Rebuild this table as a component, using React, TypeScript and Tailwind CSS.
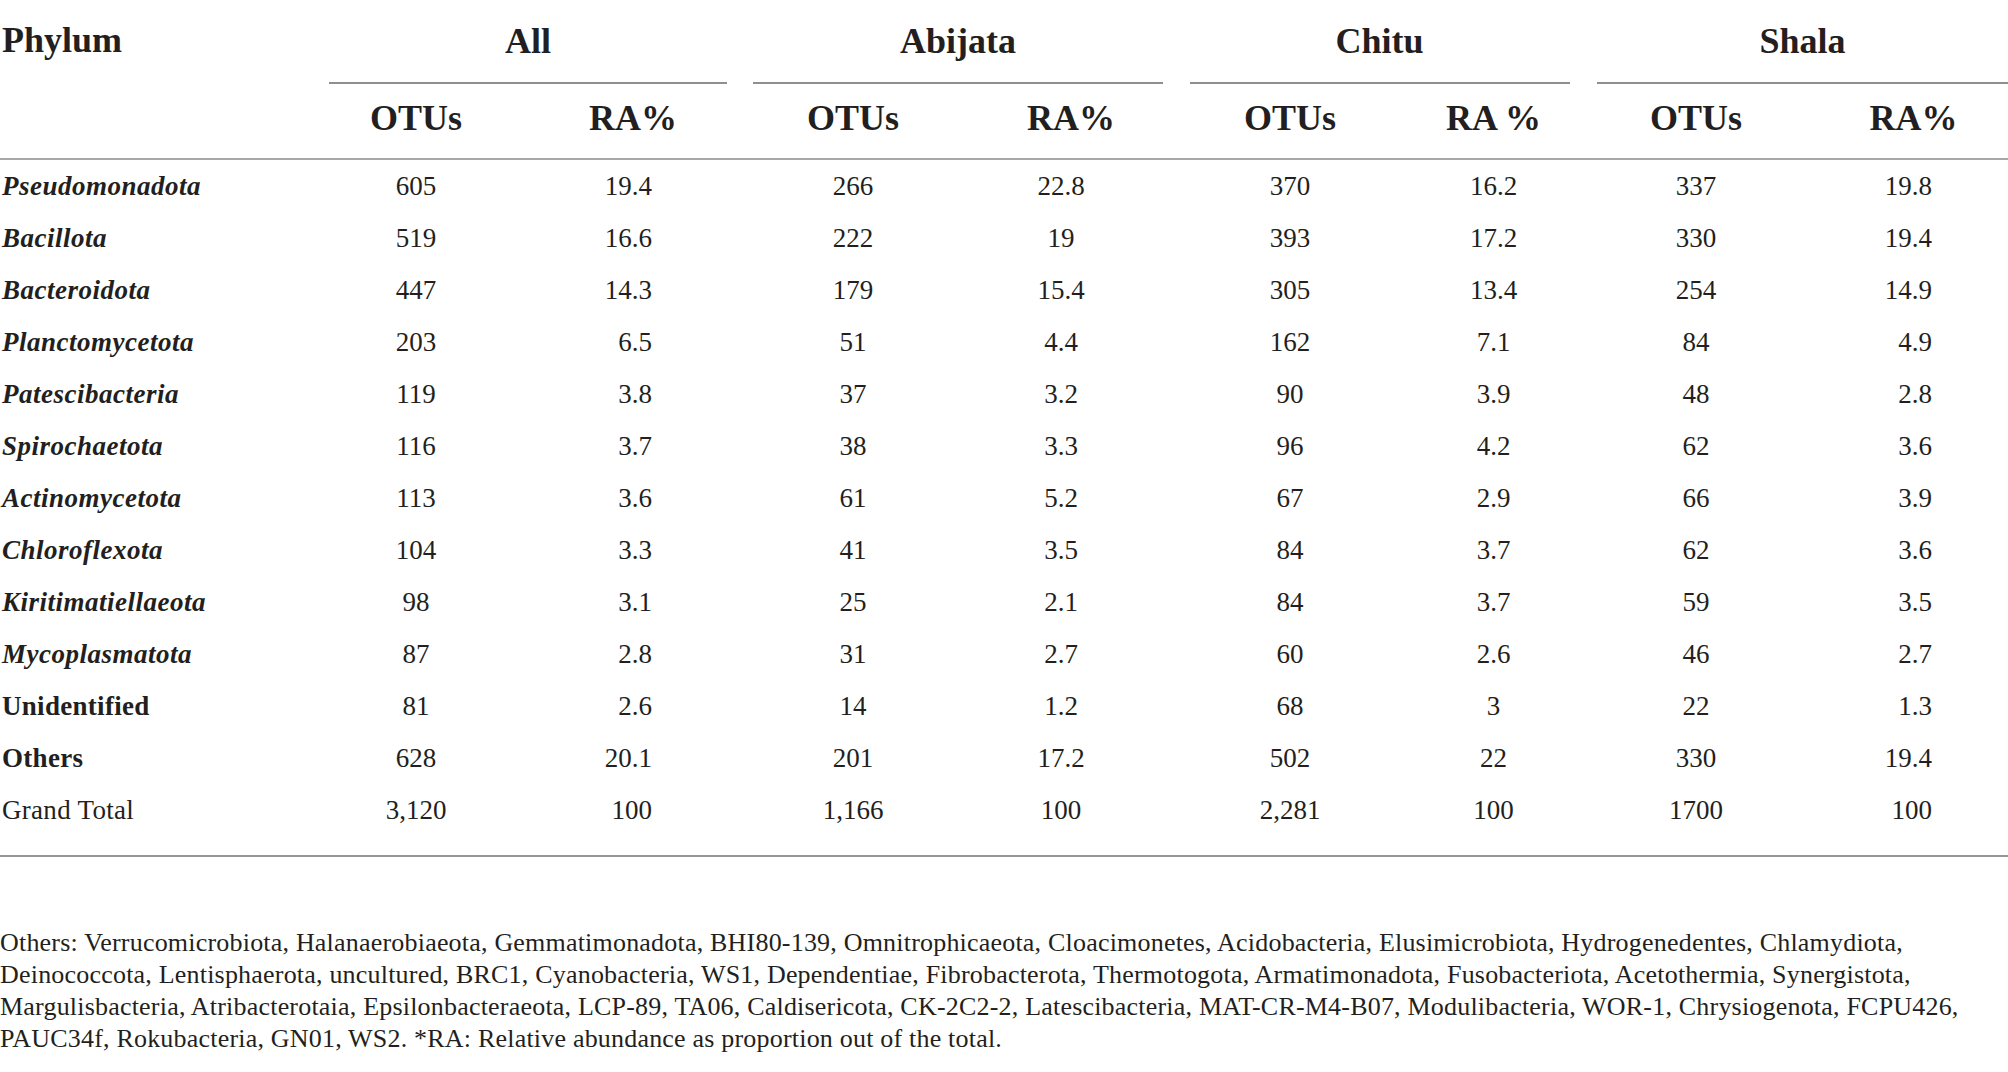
import React from 'react';

type Row = {
  name: string;
  style: 'italic' | 'bold' | 'plain';
  values: string[];
};

const rows: Row[] = [
  { name: 'Pseudomonadota', style: 'italic', values: ['605', '19.4', '266', '22.8', '370', '16.2', '337', '19.8'] },
  { name: 'Bacillota', style: 'italic', values: ['519', '16.6', '222', '19', '393', '17.2', '330', '19.4'] },
  { name: 'Bacteroidota', style: 'italic', values: ['447', '14.3', '179', '15.4', '305', '13.4', '254', '14.9'] },
  { name: 'Planctomycetota', style: 'italic', values: ['203', '6.5', '51', '4.4', '162', '7.1', '84', '4.9'] },
  { name: 'Patescibacteria', style: 'italic', values: ['119', '3.8', '37', '3.2', '90', '3.9', '48', '2.8'] },
  { name: 'Spirochaetota', style: 'italic', values: ['116', '3.7', '38', '3.3', '96', '4.2', '62', '3.6'] },
  { name: 'Actinomycetota', style: 'italic', values: ['113', '3.6', '61', '5.2', '67', '2.9', '66', '3.9'] },
  { name: 'Chloroflexota', style: 'italic', values: ['104', '3.3', '41', '3.5', '84', '3.7', '62', '3.6'] },
  { name: 'Kiritimatiellaeota', style: 'italic', values: ['98', '3.1', '25', '2.1', '84', '3.7', '59', '3.5'] },
  { name: 'Mycoplasmatota', style: 'italic', values: ['87', '2.8', '31', '2.7', '60', '2.6', '46', '2.7'] },
  { name: 'Unidentified', style: 'bold', values: ['81', '2.6', '14', '1.2', '68', '3', '22', '1.3'] },
  { name: 'Others', style: 'bold', values: ['628', '20.1', '201', '17.2', '502', '22', '330', '19.4'] },
  { name: 'Grand Total', style: 'plain', values: ['3,120', '100', '1,166', '100', '2,281', '100', '1700', '100'] },
];

// alignment of each value column (OTUs centred, RA columns follow the original layout)
const valueCell = [
  'justify-center',
  'justify-end pr-[88px]',
  'justify-center',
  'justify-center pr-[20px]',
  'justify-center',
  'justify-center',
  'justify-center',
  'justify-end pr-[76px]',
];

const groups = [
  { name: 'All', rule: 'mx-[13px]' },
  { name: 'Abijata', rule: 'mx-[13px]' },
  { name: 'Chitu', rule: 'ml-[14px] mr-[13px]' },
  { name: 'Shala', rule: 'ml-[14px] mr-0' },
];

const subHeads = ['OTUs', 'RA%', 'OTUs', 'RA%', 'OTUs', 'RA %', 'OTUs', 'RA%'];

const footnote = [
  'Others: Verrucomicrobiota, Halanaerobiaeota, Gemmatimonadota, BHI80-139, Omnitrophicaeota, Cloacimonetes, Acidobacteria, Elusimicrobiota, Hydrogenedentes, Chlamydiota,',
  'Deinococcota, Lentisphaerota, uncultured, BRC1, Cyanobacteria, WS1, Dependentiae, Fibrobacterota, Thermotogota, Armatimonadota, Fusobacteriota, Acetothermia, Synergistota,',
  'Margulisbacteria, Atribacterotaia, Epsilonbacteraeota, LCP-89, TA06, Caldisericota, CK-2C2-2, Latescibacteria, MAT-CR-M4-B07, Modulibacteria, WOR-1, Chrysiogenota, FCPU426,',
  'PAUC34f, Rokubacteria, GN01, WS2. *RA: Relative abundance as proportion out of the total.',
];

const nameClass = {
  italic: 'font-bold italic tracking-[0.5px]',
  bold: 'font-bold tracking-[0.3px]',
  plain: 'tracking-[0.3px]',
};

export default function App() {
  return (
    <div className="w-[2008px] h-[1072px] overflow-hidden bg-white text-[#231f20] [font-family:'Liberation_Serif',serif]">
      <div className="grid grid-cols-[316px_200px_224px_226px_210px_228px_179px_226px_199px]">
        {/* header row 1 */}
        <div className="row-span-2 h-[158px] pl-[2px] pt-[18px] text-[36px] leading-[44px] font-bold">Phylum</div>
        {groups.map((g) => (
          <div key={g.name} className="col-span-2 flex flex-col">
            <div className="h-[82px] flex items-center justify-center text-[36px] font-bold">
              <span className={g.name === 'Shala' ? 'pl-[14px]' : ''}>{g.name}</span>
            </div>
            <div className={`h-[2px] bg-[#8f8f8f] ${g.rule}`} />
          </div>
        ))}

        {/* header row 2 */}
        {subHeads.map((s, i) => (
          <div
            key={i}
            className={`h-[74px] pb-[6px] flex items-center justify-center text-[36px] font-bold ${
              i === 1 || i === 7 ? 'pl-[10px]' : ''
            }`}
          >
            {s}
          </div>
        ))}

        <div className="col-span-9 h-[2px] bg-[#a8a8a8]" />

        {/* body */}
        {rows.map((r) => (
          <React.Fragment key={r.name}>
            <div className={`h-[52px] flex items-center pl-[2px] text-[27px] ${nameClass[r.style]}`}>{r.name}</div>
            {r.values.map((v, i) => (
              <div key={i} className={`h-[52px] flex items-center text-[27px] ${valueCell[i]}`}>
                {v}
              </div>
            ))}
          </React.Fragment>
        ))}

        <div className="col-span-9 h-[19px]" />
        <div className="col-span-9 h-[2px] bg-[#969696]" />
      </div>

      <div className="mt-[70px] text-[26px] leading-[32px] tracking-[0.2px]">
        {footnote.map((line) => (
          <div key={line} className="whitespace-nowrap">
            {line}
          </div>
        ))}
      </div>
    </div>
  );
}
